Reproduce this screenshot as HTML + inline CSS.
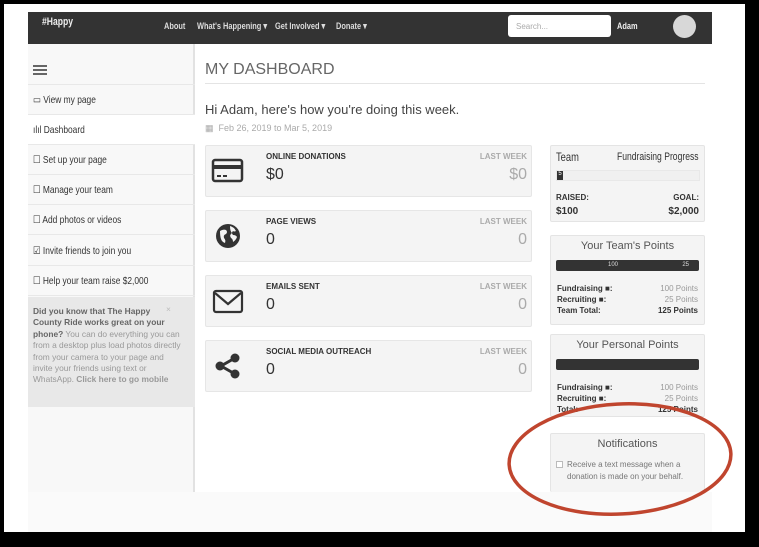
<!DOCTYPE html><html><head><style>
*{margin:0;padding:0;box-sizing:border-box}
body{width:759px;height:547px;background:#000;position:relative;overflow:hidden;font-family:"Liberation Sans",sans-serif;color:#333}
.a{position:absolute}
.n{font-family:"Liberation Sans",sans-serif;font-weight:bold;display:inline-block;transform-origin:0 0;transform:scaleX(0.78);white-space:nowrap}
.card{position:absolute;left:205px;width:327px;height:52px;background:#f4f4f4;border:1px solid #e6e6e6;border-radius:2px}
.card .t{position:absolute;left:60px;top:6px;font-size:8px;font-weight:bold;color:#333}
.card .v{position:absolute;left:60px;top:20px;font-size:16px;color:#333}
.card .lw{position:absolute;right:4px;top:6px;font-size:8px;font-weight:bold;color:#aaa}
.card .lv{position:absolute;right:4px;top:20px;font-size:16px;color:#aaa}
.card svg{position:absolute;left:5px;top:10px}
.si{position:absolute;left:28px;width:167px;height:30px;border-bottom:1px solid #e8e8e8;font-size:10.5px;padding:9px 0 0 5px;color:#333}
.si span{display:inline-block;transform-origin:0 0;transform:scaleX(0.8);white-space:nowrap}
.pan{position:absolute;left:550px;width:155px;background:#f4f4f4;border:1px solid #e4e4e4;border-radius:2px}
.row{position:absolute;left:6px;right:6px;font-size:8px;height:11px}
.row b{color:#333}.row span{position:absolute;right:0;color:#999}
.nv{position:absolute;top:21px;font-size:9.5px;color:#ddd;white-space:nowrap}
</style></head><body>
<div class="a" style="left:4px;top:4px;width:741px;height:528px;background:#fff"></div>
<div class="a" style="left:28px;top:492px;width:684px;height:40px;background:#fafafa"></div>
<div class="a" style="left:28px;top:12px;width:684px;height:32px;background:#333"></div>
<div class="a" style="left:42px;top:16px;font-size:11px;color:#eee"><span class="n">#Happy</span></div>
<div class="nv" style="left:164px"><span class="n">About</span></div>
<div class="nv" style="left:197px"><span class="n">What's Happening ▾</span></div>
<div class="nv" style="left:275px"><span class="n">Get Involved ▾</span></div>
<div class="nv" style="left:336px"><span class="n">Donate ▾</span></div>
<div class="a" style="left:508px;top:15px;width:103px;height:22px;background:#fff;border-radius:3px;font-size:8px;color:#aaa;padding:7px 8px">Search...</div>
<div class="nv" style="left:617px"><span class="n" style="color:#eee">Adam</span></div>
<div class="a" style="left:673px;top:15px;width:23px;height:23px;border-radius:50%;background:#d8d8d8"></div>
<div class="a" style="left:28px;top:44px;width:167px;height:448px;background:#f8f8f8;border-right:2px solid #e2e2e2"></div>
<div class="a" style="left:33px;top:65px;width:14px;height:2px;background:#666;box-shadow:0 4px #666,0 8px #666"></div>
<div class="a" style="left:28px;top:84px;width:167px;height:1px;background:#e8e8e8"></div>
<div class="si" style="top:85px"><span>▭ View my page</span></div>
<div class="si" style="top:115px;background:#fff"><span>ılıl Dashboard</span></div>
<div class="si" style="top:145px"><span>☐ Set up your page</span></div>
<div class="si" style="top:175px"><span>☐ Manage your team</span></div>
<div class="si" style="top:205px"><span>☐ Add photos or videos</span></div>
<div class="si" style="top:236px"><span>☑ Invite friends to join you</span></div>
<div class="si" style="top:266px"><span>☐ Help your team raise $2,000</span></div>
<div class="a" style="left:28px;top:297px;width:167px;height:110px;background:#e8e8e8;font-size:8.4px;line-height:11.4px;color:#999;padding:9px 14px 0 5px"><b style="color:#666">Did you know that The Happy County Ride works great on your phone?</b> You can do everything you can from a desktop plus load photos directly from your camera to your page and invite your friends using text or WhatsApp. <b>Click here to go mobile</b><span class="a" style="left:138px;top:7px;color:#bbb">×</span></div>
<div class="a" style="left:205px;top:61px;font-size:16px;color:#666">MY DASHBOARD</div>
<div class="a" style="left:205px;top:83px;width:500px;height:1px;background:#e4e4e4"></div>
<div class="a" style="left:205px;top:102px;font-size:13px;color:#444">Hi Adam, here's how you're doing this week.</div>
<div class="a" style="left:205px;top:123px;font-size:9px;color:#aaa">▦&nbsp;&nbsp;Feb 26, 2019 to Mar 5, 2019</div>
<div class="card" style="top:145px"><svg width="34" height="30" viewBox="0 0 34 30"><rect x="2" y="4" width="29" height="21" rx="2" fill="none" stroke="#333" stroke-width="2.5"/><rect x="2" y="9" width="29" height="4" fill="#333"/><rect x="6" y="19" width="4" height="2" fill="#333"/><rect x="12" y="19" width="4" height="2" fill="#333"/></svg><div class="t">ONLINE DONATIONS</div><div class="v">$0</div><div class="lw">LAST WEEK</div><div class="lv">$0</div></div>
<div class="card" style="top:210px"><svg width="34" height="30" viewBox="0 0 34 30"><circle cx="17" cy="15" r="12" fill="#333"/><path d="M9 10q3-2 6-1q2 2 0 4q-3 1-2 4q2 2 1 5q-3-1-4-4q-1-3-1-8z M19 5q4 1 6 5q-2 1-3 0q-2 2 0 4q3 0 4 2q-1 3-4 5q0-3-2-4q-2-3 1-5q-2-2-2-7z" fill="#f4f4f4"/></svg><div class="t">PAGE VIEWS</div><div class="v">0</div><div class="lw">LAST WEEK</div><div class="lv">0</div></div>
<div class="card" style="top:275px"><svg width="34" height="30" viewBox="0 0 34 30"><rect x="3" y="5" width="28" height="21" rx="2" fill="none" stroke="#333" stroke-width="2.2"/><path d="M4 7l13 11l13-11" fill="none" stroke="#333" stroke-width="2.2"/></svg><div class="t">EMAILS SENT</div><div class="v">0</div><div class="lw">LAST WEEK</div><div class="lv">0</div></div>
<div class="card" style="top:340px"><svg width="34" height="30" viewBox="0 0 34 30"><path d="M24 7L10 15L24 23" stroke="#333" stroke-width="3" fill="none"/><circle cx="24" cy="7" r="4.5" fill="#333"/><circle cx="9" cy="15" r="4.5" fill="#333"/><circle cx="24" cy="23" r="4.5" fill="#333"/></svg><div class="t">SOCIAL MEDIA OUTREACH</div><div class="v">0</div><div class="lw">LAST WEEK</div><div class="lv">0</div></div>
<div class="pan" style="top:145px;height:77px">
<div class="a" style="left:5px;top:4px;font-size:12px;color:#333"><span class="n" style="font-weight:normal">Team</span></div>
<div class="a" style="left:66px;top:5px;font-size:11px;color:#333;white-space:nowrap"><span class="n" style="font-weight:normal">Fundraising Progress</span></div>
<div class="a" style="left:5px;top:24px;width:144px;height:11px;background:#f0f0f0;border:1px solid #e8e8e8"><div style="width:6px;height:9px;background:#333;color:#fff;font-size:6px;text-align:center">5</div></div>
<div class="a" style="left:5px;top:47px;font-size:8px;font-weight:bold">RAISED:</div>
<div class="a" style="right:5px;top:47px;font-size:8px;font-weight:bold">GOAL:</div>
<div class="a" style="left:5px;top:60px;font-size:10px;font-weight:bold">$100</div>
<div class="a" style="right:5px;top:60px;font-size:10px;font-weight:bold">$2,000</div></div>
<div class="pan" style="top:235px;height:90px">
<div class="a" style="left:0;right:0;top:4px;text-align:center;font-size:11px;color:#555">Your Team's Points</div>
<div class="a" style="left:5px;right:5px;top:24px;height:11px;background:#333;border-radius:2px;font-size:6px;color:#ddd"><span class="a" style="left:52px;top:2px">100</span><span class="a" style="right:10px;top:2px">25</span></div>
<div class="row" style="top:48px"><b>Fundraising ■:</b><span>100 Points</span></div>
<div class="row" style="top:59px"><b>Recruiting ■:</b><span>25 Points</span></div>
<div class="row" style="top:70px"><b>Team Total:</b><span style="color:#333;font-weight:bold">125 Points</span></div></div>
<div class="pan" style="top:334px;height:83px">
<div class="a" style="left:0;right:0;top:4px;text-align:center;font-size:11px;color:#555">Your Personal Points</div>
<div class="a" style="left:5px;right:5px;top:24px;height:11px;background:#333;border-radius:2px"></div>
<div class="row" style="top:48px"><b>Fundraising ■:</b><span>100 Points</span></div>
<div class="row" style="top:59px"><b>Recruiting ■:</b><span>25 Points</span></div>
<div class="row" style="top:70px"><b>Total:</b><span style="color:#333;font-weight:bold">125 Points</span></div></div>
<div class="pan" style="top:433px;height:59px;border-bottom:none">
<div class="a" style="left:0;right:0;top:4px;text-align:center;font-size:11px;color:#555">Notifications</div>
<div class="a" style="left:5px;top:27px;width:7px;height:7px;border:1px solid #bbb;background:#fff"></div>
<div class="a" style="left:16px;top:25px;font-size:8px;line-height:11.5px;color:#777">Receive a text message when a<br>donation is made on your behalf.</div></div>
<svg class="a" style="left:0;top:0" width="759" height="547"><ellipse cx="620" cy="459" rx="111" ry="55" fill="none" stroke="#c0452e" stroke-width="3.5" transform="rotate(-3 620 459)"/></svg>
</body></html>
